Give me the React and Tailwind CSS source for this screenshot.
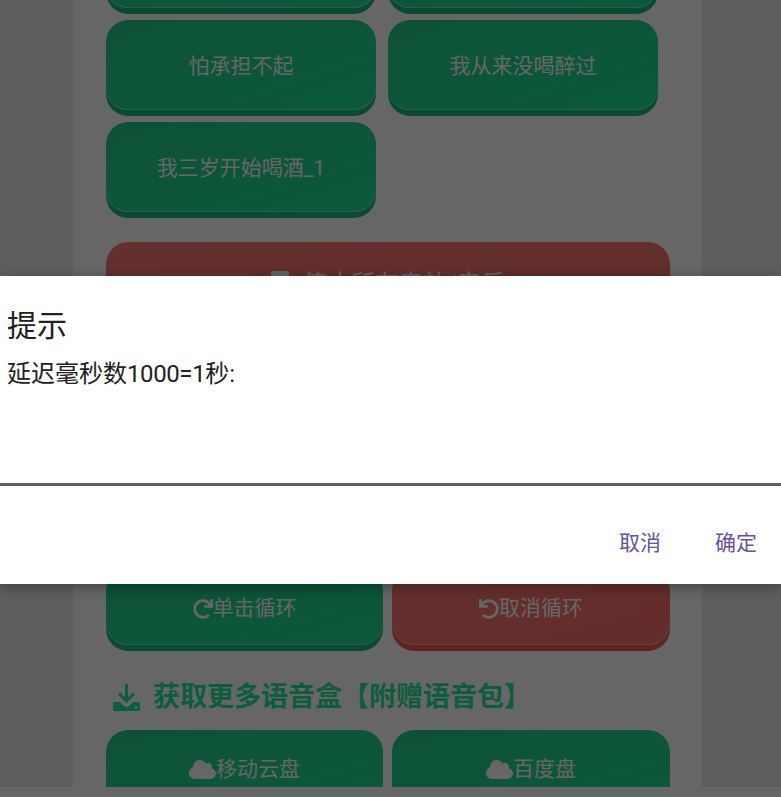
import React from "react";
import { FaRedo, FaUndo, FaCloud } from "react-icons/fa";

const font = { fontFamily: 'Roboto, "Noto Sans CJK SC", sans-serif' };

function Btn({ children, red, className = "h-[90px]" }) {
  const tone = red
    ? "bg-gradient-to-br from-[#f97a76] to-[#fb6f6a] shadow-[0_6px_0_#ee5a54] border-b border-[#ff9a97]"
    : "bg-gradient-to-br from-[#22cc8a] to-[#1fde95] shadow-[0_6px_0_#1bb97f] border-b border-[#5fefb8]";
  return (
    <div className={`flex items-center justify-center rounded-[22px] pt-[4px] text-white text-[21px] ${tone} ${className}`}>
      {children}
    </div>
  );
}

function DownloadIcon({ className }) {
  return (
    <svg viewBox="0 0 27 27" className={className} fill="currentColor">
      <path d="M12 0h3v13.5l5-5 2 2-8.5 8.5L5 10.500l2-2 5 5z" />
      <path d="M1.500 18h5.200l4.200 3.700a3.800 3.800 0 0 0 5.200 0l4.200-3.700h5.200a1.500 1.500 0 0 1 1.500 1.500v6a1.500 1.500 0 0 1-1.500 1.500h-24A1.500 1.500 0 0 1 0 25.500v-6A1.500 1.500 0 0 1 1.500 18zm21.500 4.200a1.300 1.300 0 1 0 0 2.600 1.300 1.300 0 0 0 0-2.600z" fillRule="evenodd" />
    </svg>
  );
}

export default function App() {
  return (
    <div className="relative h-[797px] w-[781px] overflow-hidden bg-white" style={font}>
      <div className="h-[787px] overflow-hidden bg-[#e8eeec] px-[73px]">
        <div className="-mt-[82px] flex h-[900px] w-[629px] flex-col bg-white px-[33px]">
          <div className="grid grid-cols-[270px_270px] gap-[12px]">
            <Btn>一杯倒</Btn>
            <Btn>酒量不行</Btn>
            <Btn>怕承担不起</Btn>
            <Btn>我从来没喝醉过</Btn>
            <Btn>我三岁开始喝酒_1</Btn>
          </div>
          <div className="mt-[30px] w-[564px]">
            <Btn red className="h-[90px] gap-[14px] pb-[10px] !text-[24px]">
              <span className="mb-[8px] h-[18px] w-[18px] rounded-[3px] bg-white" />
              停止所有音效/音乐
            </Btn>
          </div>
          <div className="mt-[30px] h-[207px]" />
          <div className="grid grid-cols-[277px_278px] gap-x-[9px]">
            <Btn className="h-[76px]"><FaRedo className="size-[20px] shrink-0" />单击循环</Btn>
            <Btn red className="h-[76px]"><FaUndo className="size-[20px] shrink-0" />取消循环</Btn>
          </div>
          <div className="mt-[33px] flex items-center pl-[7px] text-[27px] font-bold leading-[38px] text-[#1ce89c]">
            <DownloadIcon className="mr-[13px] size-[27px] shrink-0" />
            获取更多语音盒【附赠语音包】
          </div>
          <div className="mt-[14px] grid grid-cols-[277px_278px] gap-x-[9px]">
            <Btn className="h-[76px]"><FaCloud className="size-[27px] shrink-0" />移动云盘</Btn>
            <Btn className="h-[76px]"><FaCloud className="size-[27px] shrink-0" />百度盘</Btn>
          </div>
        </div>
      </div>

      <div className="absolute inset-0 bg-black/60" />

      <div className="absolute inset-x-0 top-[276px] flex h-[308px] flex-col bg-white text-[#212121] shadow-[0_3px_14px_rgba(0,0,0,0.35)]">
        <div className="px-[7px] pt-[30px] text-[30px] leading-[40px]">提示</div>
        <div className="px-[7px] pt-[11px] text-[24px] leading-[34px]">
          延迟毫秒数<span className="tracking-[-0.4px]">1000=1</span>秒:
        </div>
        <div className="mt-[92px] h-[3px] bg-[#625b71]" />
        <div className="flex flex-1 items-center justify-end gap-[54px] pr-[24px] pt-[18px] text-[21px] text-[#6750a4]">
          <span>取消</span>
          <span>确定</span>
        </div>
      </div>
    </div>
  );
}
